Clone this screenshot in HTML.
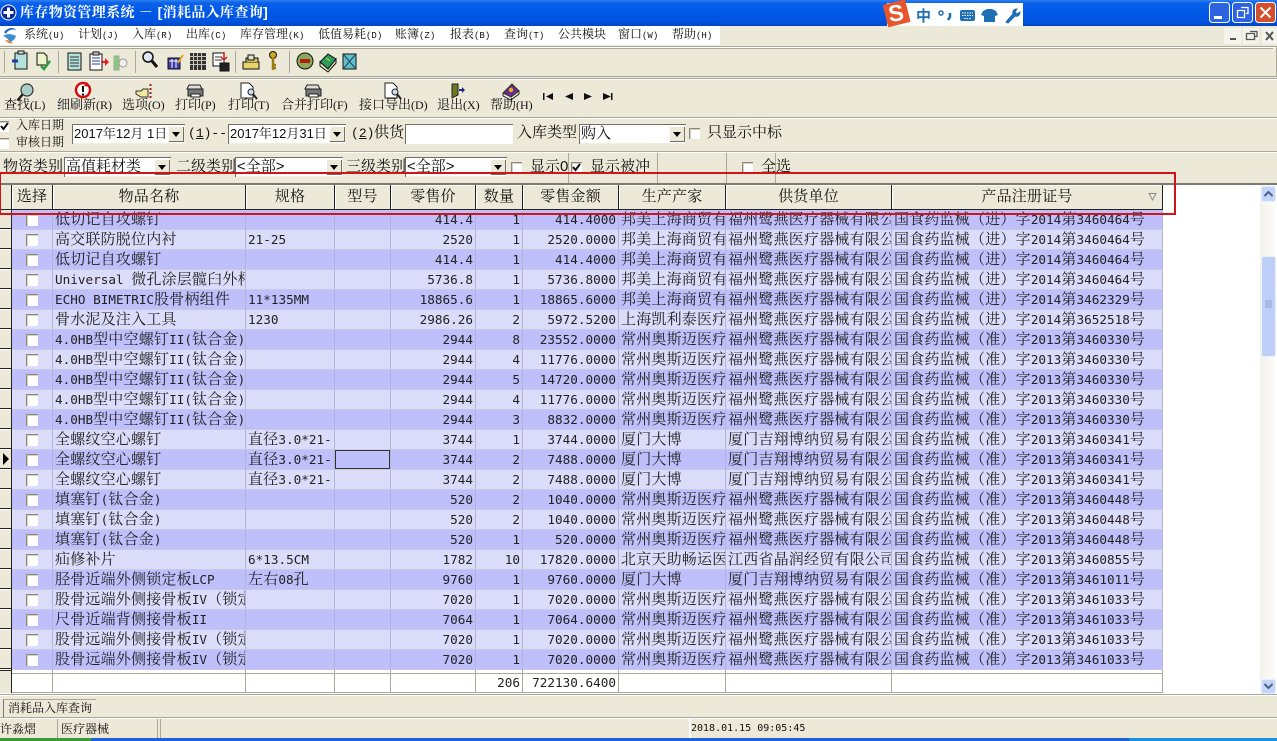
<!DOCTYPE html>
<html lang="zh"><head><meta charset="utf-8"><title>库存物资管理系统</title>
<style>
html,body{margin:0;padding:0}
body{width:1277px;height:741px;overflow:hidden;position:relative;background:#ece9d8;font-family:"Liberation Sans","Noto Serif CJK SC",serif;color:#111}
.a,.t{position:absolute}
.t{white-space:nowrap;line-height:20px;font-size:15px}
.t i{font:normal 9px "Liberation Mono",monospace}
.m{font-size:12px;top:24px;height:20px}
.b{font-size:13px;top:95px}
.b i{font:normal 12px "Liberation Serif",serif}
.f{font-size:15px}
.combo{position:absolute;background:#fff;box-shadow:inset 1px 1px 0 #716f64,inset -1px -1px 0 #f1efe2;height:20px;font-size:15px;line-height:20px;padding-left:2px;box-sizing:border-box;overflow:hidden;white-space:nowrap}
.combo u{position:absolute;right:1px;top:2px;width:16px;height:16px;background:#ece9d8;box-shadow:inset 1px 1px 0 #fff,inset -1px -1px 0 #716f64;text-decoration:none}
.combo u:after{content:"";position:absolute;left:4px;top:6px;border:4px solid transparent;border-top:5px solid #000;border-bottom:0}
.cb{position:absolute;width:11px;height:11px;background:#fff;box-shadow:inset 1px 1px 0 #8a887c,inset 2px 2px 0 #d5d2c4}
.hd{position:absolute;top:185px;height:24px;background:#ece9d8;border-right:1px solid #222;box-shadow:inset 1px 1px 0 #fff;text-align:center;font-size:15px;line-height:24px;box-sizing:content-box;letter-spacing:.2px}
table{position:absolute;left:12px;top:210px;border-collapse:separate;border-spacing:0;table-layout:fixed;width:1151px;font-size:15px;letter-spacing:.2px}
tr{height:20px}
td{height:19px;padding:0 0 0 2px;border-right:1px solid #b4b4d8;border-bottom:1px solid #c9c9e6;overflow:hidden;white-space:nowrap;line-height:15px;box-sizing:content-box;vertical-align:middle;color:#222}
tr:nth-child(odd) td{background:#bfbffb}
tr:nth-child(even) td{background:#dbdbfa}
td.r{text-align:right;padding:0 2px 0 0}
td,td.r{font-size:15px}
td.r,td i{font-family:"DejaVu Sans Mono",monospace;font-size:12.67px;font-style:normal;letter-spacing:0;font-weight:normal}
td s{display:block;width:12px;height:12px;margin:0 0 0 14px;background:#fff;box-shadow:inset 1px 1px 0 #8a887c,inset 2px 2px 0 #d5d2c4}
td.c{padding:0}
</style></head><body>

<!-- title bar -->
<div class="a" style="left:0;top:0;width:1277px;height:26px;background:linear-gradient(#2f80f0 0,#0a62ea 3px,#0058e6 12px,#0055e0 21px,#0046c4 26px)"></div>
<svg class="a" style="left:0;top:4px" width="18" height="18"><circle cx="8.5" cy="8.5" r="7.5" fill="#0a2a9a" stroke="#fff"/><path d="M8.5 3.5v10M3.5 8.5h10" stroke="#fff" stroke-width="3"/></svg>
<div class="t" style="left:20px;top:2px;color:#fff;font-weight:bold;font-size:14px;letter-spacing:.35px">库存物资管理系统 － [消耗品入库查询]</div>

<!-- sogou bar -->
<div class="a" style="left:887px;top:3px;width:136px;height:23px;background:#fff"></div>
<svg class="a" style="left:881px;top:0" width="145" height="28">
<rect x="4" y="2" width="23" height="23" fill="#e8552a" transform="rotate(-14 15 13)"/>
<text x="15" y="21" text-anchor="middle" font-family="Liberation Sans" font-size="23" font-weight="bold" fill="#fff" transform="rotate(-8 15 13)">S</text>
<text x="35" y="21" font-family="Noto Sans CJK SC" font-size="15" font-weight="bold" fill="#1f6fb5">中</text>
<circle cx="60" cy="13" r="2" fill="none" stroke="#1f6fb5" stroke-width="1.5"/><path d="M69 13v4l-2 3" stroke="#1f6fb5" stroke-width="2.5" fill="none"/>
<rect x="79" y="10" width="15" height="11" rx="2" fill="#1f6fb5"/><path d="M81 13h11M81 15.5h11M83 18.500h7" stroke="#fff" stroke-dasharray="1.500 1"/>
<path d="M102 11l4-2h5l4 2 2 4-3 1v6h-11v-6l-3-1z" fill="#1f6fb5"/>
<path d="M125 22l7-8c-1-3 1-5 4-5l-2 3 2 2 3-2c0 3-2 5-5 4l-7 7z" fill="#1f6fb5" stroke="#1f6fb5"/>
</svg>

<!-- window buttons -->
<svg class="a" style="left:1208px;top:2px" width="69" height="22">
<rect x="1.500" y=".5" width="20" height="20" rx="3" fill="#2d62e0" stroke="#fff"/><rect x="6" y="14" width="8" height="3" fill="#fff"/>
<rect x="24.500" y=".5" width="20" height="20" rx="3" fill="#2d62e0" stroke="#fff"/><path d="M33 5.500h7v6h-2M29.500 8.500h7v7h-7z" stroke="#fff" fill="none" stroke-width="1.300"/>
<rect x="47.500" y=".5" width="20" height="20" rx="3" fill="#d4502c" stroke="#fff"/><path d="M52.500 5.500l10 10M62.500 5.500l-10 10" stroke="#fff" stroke-width="2"/>
</svg>

<!-- menu bar -->
<div class="a" style="left:0;top:26px;width:720px;height:19px;background:#fff"></div>
<svg class="a" style="left:2px;top:27px" width="16" height="17"><path d="M2 5C6 0 12 0 14 3 10 2 6 3 4 7z" fill="#2a6fc4"/><path d="M1 9c4-3 9-2 13 0-1 3-3 5-6 6C6 12 4 10 1 9z" fill="#3a8fd0"/><path d="M3 13c3 0 5 1 8 3-3 1-6 0-8-3z" fill="#e8812a"/></svg>
<div class="t m" style="left:24px">系统<i>(U)</i></div>
<div class="t m" style="left:78px">计划<i>(J)</i></div>
<div class="t m" style="left:132px">入库<i>(R)</i></div>
<div class="t m" style="left:186px">出库<i>(C)</i></div>
<div class="t m" style="left:240px">库存管理<i>(K)</i></div>
<div class="t m" style="left:318px">低值易耗<i>(D)</i></div>
<div class="t m" style="left:395px">账簿<i>(Z)</i></div>
<div class="t m" style="left:450px">报表<i>(B)</i></div>
<div class="t m" style="left:504px">查询<i>(T)</i></div>
<div class="t m" style="left:558px">公共模块</div>
<div class="t m" style="left:618px">窗口<i>(W)</i></div>
<div class="t m" style="left:672px">帮助<i>(H)</i></div>
<svg class="a" style="left:1224px;top:27px" width="53" height="18">
<rect x="0" y="1" width="17" height="16" fill="#f4f3ec"/><rect x="19" y="1" width="16" height="16" fill="#f4f3ec"/><rect x="38" y="1" width="15" height="16" fill="#f4f3ec"/>
<path d="M6 12h6" stroke="#555" stroke-width="2"/><path d="M26 4.500h7v5h-2M22.500 6.500h8v6h-8z" stroke="#555" fill="none" stroke-width="1.300"/><path d="M42 5l7 8M49 5l-7 8" stroke="#555" stroke-width="2"/>
</svg>

<!-- toolbar lines -->
<div class="a" style="left:0;top:46px;width:1277px;height:1px;background:#aca899"></div>
<div class="a" style="left:0;top:47px;width:1277px;height:1px;background:#fff"></div>
<div class="a" style="left:0;top:48px;width:1273px;height:1px;background:#aca899"></div>
<div class="a" style="left:0;top:76px;width:1277px;height:1px;background:#aca899"></div>
<div class="a" style="left:0;top:78px;width:1277px;height:1px;background:#aca899"></div>
<div class="a" style="left:0;top:79px;width:1277px;height:1px;background:#fff"></div>
<div class="a" style="left:0;top:117px;width:1277px;height:1px;background:#aca899"></div>
<div class="a" style="left:0;top:118px;width:1277px;height:1px;background:#fff"></div>
<div class="a" style="left:0;top:151px;width:1277px;height:1px;background:#aca899"></div>
<div class="a" style="left:0;top:152px;width:1277px;height:1px;background:#fff"></div>
<div class="a" style="left:1276px;top:46px;width:1px;height:30px;background:#aca899"></div>

<!-- toolbar 1 icons -->
<svg class="a" style="left:0;top:48px" width="370" height="28">
<g stroke="#aca899"><path d="M4.500 3v22M58.500 3v22M135.500 3v22M235.500 3v22M289.500 3v22"/></g>
<g stroke="#111" stroke-width="1">
<rect x="15" y="5" width="12" height="16" fill="#b6e2dc"/><rect x="18" y="3" width="6" height="3" fill="#ddd"/><path d="M12 13h6" stroke="#1c3ca8" stroke-width="3"/>
<path d="M37 5h7l3 3v9h-10z" fill="#eef2c8"/><path d="M41 18l3 3 6-8" stroke="#2c9a3c" stroke-width="2.500" fill="none"/>
<rect x="68" y="5" width="13" height="17" fill="#b6e2dc"/><path d="M70 9h9M70 12h9M70 15h9M70 18h9" stroke="#333"/>
<rect x="90" y="6" width="12" height="16" fill="#fff"/><rect x="93" y="4" width="6" height="3" fill="#ccc"/><path d="M92 10h8M92 13h8M92 16h8" stroke="#223a9a"/><path d="M101 13h4v-3l4 4-4 4v-3h-4z" fill="#e02020" stroke="none"/>
<path d="M114 8h5v14h-5z" fill="#8bc87c" stroke="#9a9"/><circle cx="123" cy="15" r="4" fill="#eee" stroke="#999"/>
<circle cx="148" cy="9" r="5" fill="#dfe8f0" stroke-width="1.500"/><path d="M152 13l5 6" stroke-width="3"/>
<rect x="168" y="10" width="12" height="11" fill="#3a3aa8"/><path d="M169 13h10M172 11v9M176 11v9" stroke="#fff"/><path d="M178 15l5-8" stroke="#e0a020" stroke-width="2"/>
<g fill="#333" stroke="none"><rect x="190" y="5" width="16" height="17"/></g><path d="M190 8.500h16M190 12.500h16M190 16.500h16M193.500 5v17M197.500 5v17M201.500 5v17" stroke="#c8c6b4"/>
<rect x="213" y="5" width="11" height="13" fill="#fff"/><path d="M215 9h7M215 12h7" stroke="#333"/><rect x="220" y="15" width="9" height="8" fill="#222"/><path d="M224 4v8M221 9l3 3 3-3" stroke="#d02020" stroke-width="1.500" fill="none"/>
<path d="M243 14h16v7h-16z" fill="#e8d46a"/><path d="M246 14v-4h12v4" fill="#d0c060"/><rect x="248" y="7" width="6" height="5" fill="#e0e0d0"/>
<circle cx="273" cy="7" r="3.500" fill="#d0a820"/><path d="M273 10v12M273 17h3M273 20h3" stroke="#a07c10" stroke-width="2.500"/>
<circle cx="305" cy="13" r="8" fill="#8ca85c"/><rect x="300" y="11" width="10" height="4" fill="#b02010" stroke="none"/>
<path d="M320 14l8-8 8 5-8 10z" fill="#2a9c5c"/><path d="M320 14v4l8 6 8-9v-4l-8 10z" fill="#e8e8c0"/><path d="M326 10l4 3" stroke="#e0d030"/>
<rect x="343" y="6" width="13" height="15" fill="#60c0c8"/><path d="M344 7l11 13M355 7l-11 13" stroke="#246"/>
</g></svg>

<!-- toolbar 2 icons -->
<svg class="a" style="left:0;top:80px" width="620" height="24">
<circle cx="27" cy="10" r="6" fill="#a8d0c8" stroke="#333" stroke-width="1.200"/><path d="M22.500 14.500l-5 6" stroke="#222" stroke-width="2.500"/>
<circle cx="83" cy="10" r="7" fill="#fff" stroke="#d01010" stroke-width="2.500"/><path d="M83 6v6M83 13.500v2" stroke="#111" stroke-width="2"/><path d="M87 2l3 5-6-1z" fill="#d01010"/>
<path d="M136 11h5l2-2h5v8h-7l-5-3z" fill="#f0e8a0" stroke="#333"/><path d="M150.500 4v14" stroke="#a02020" stroke-width="2" stroke-dasharray="2 2"/>
<path d="M189 5h11l2 4h-15z" fill="#ddd" stroke="#222"/><rect x="188" y="9" width="15" height="7" fill="#777" stroke="#222"/><rect x="191" y="14" width="9" height="3" fill="#fff" stroke="#222"/>
<path d="M241 3h8l4 4v11h-12z" fill="#fff" stroke="#222"/><circle cx="251" cy="12" r="3" fill="#cde" stroke="#222"/><path d="M253 14l4 5" stroke="#222" stroke-width="2"/>
<path d="M307 5h11l2 4h-15z" fill="#ddd" stroke="#222"/><rect x="306" y="9" width="15" height="7" fill="#777" stroke="#222"/><rect x="309" y="14" width="9" height="3" fill="#fff" stroke="#222"/>
<path d="M385 3h8l4 4v11h-12z" fill="#fff" stroke="#222"/><circle cx="395" cy="12" r="3" fill="#cde" stroke="#222"/><path d="M397 14l4 5" stroke="#222" stroke-width="2"/>
<path d="M452 4h6v11l-6 3z" fill="#6c7a20" stroke="#222"/><path d="M459 9h3v-2l3 3-3 3v-2h-3z" fill="#202a90"/>
<path d="M503 13v3l8 4 8-6v-3z" fill="#e8e8e8" stroke="#222"/><path d="M503 13l9-9 7 7-8 6z" fill="#6a2c90" stroke="#331"/><circle cx="511" cy="10" r="2.200" fill="#e8b020"/>
<g fill="#111"><rect x="543" y="13" width="1.500" height="7"/><path d="M553 13v7l-7-3.500zM573 13v7l-8-3.500zM584 13v7l8-3.500zM603 13v7l8-3.500z"/><rect x="611" y="13" width="1.500" height="7"/></g>
</svg>
<div class="t b" style="left:4px">查找<i>(L)</i></div>
<div class="t b" style="left:57px">细刷新<i>(R)</i></div>
<div class="t b" style="left:122px">选项<i>(O)</i></div>
<div class="t b" style="left:175px">打印<i>(P)</i></div>
<div class="t b" style="left:228px">打印<i>(T)</i></div>
<div class="t b" style="left:281px">合并打印<i>(F)</i></div>
<div class="t b" style="left:359px">接口导出<i>(D)</i></div>
<div class="t b" style="left:437px">退出<i>(X)</i></div>
<div class="t b" style="left:490px">帮助<i>(H)</i></div>

<!-- filter row 1 -->
<div class="cb" style="left:-2px;top:121px"></div>
<svg class="a" style="left:0;top:121px" width="10" height="11"><path d="M1 5l2.500 3L8 2" stroke="#111" stroke-width="2" fill="none"/></svg>
<div class="cb" style="left:-2px;top:138px"></div>
<div class="t" style="left:16px;top:115px;font-size:12px">入库日期</div>
<div class="t" style="left:16px;top:132px;font-size:12px">审核日期</div>
<div class="combo" style="left:72px;top:124px;width:113px;font-size:13px">2017年12月 1日<u></u></div>
<div class="t" style="left:188px;top:124px;font:13px/20px 'Liberation Mono',monospace">(<span style="text-decoration:underline">1</span>)--</div>
<div class="combo" style="left:228px;top:124px;width:118px;font-size:13px">2017年12月31日<u></u></div>
<div class="t" style="left:351px;top:124px;font:13px/20px 'Liberation Mono',monospace">(<span style="text-decoration:underline">2</span>)</div>
<div class="t f" style="left:374px;top:123px">供货</div>
<div class="a" style="left:405px;top:124px;width:108px;height:20px;background:#fff;box-shadow:inset 1px 1px 0 #716f64"></div>
<div class="t f" style="left:517px;top:123px">入库类型</div>
<div class="combo" style="left:579px;top:124px;width:107px">购入<u></u></div>
<div class="cb" style="left:689px;top:128px"></div>
<div class="t f" style="left:707px;top:123px">只显示中标</div>

<!-- filter row 2 -->
<div class="t f" style="left:3px;top:157px">物资类别</div>
<div class="combo" style="left:64px;top:157px;width:107px">高值耗材类<u></u></div>
<div class="t f" style="left:176px;top:157px">二级类别</div>
<div class="combo" style="left:235px;top:157px;width:108px">&lt;全部&gt;<u></u></div>
<div class="t f" style="left:346px;top:157px">三级类别</div>
<div class="combo" style="left:405px;top:157px;width:102px">&lt;全部&gt;<u></u></div>
<div class="cb" style="left:511px;top:162px"></div>
<div class="t f" style="left:530px;top:157px">显示0</div>
<div class="a" style="left:568px;top:153px;width:1px;height:30px;background:#aca899"></div>
<div class="cb" style="left:571px;top:162px"></div>
<svg class="a" style="left:571px;top:162px" width="11" height="11"><path d="M2 5l2.500 3L9 2" stroke="#111" stroke-width="2" fill="none"/></svg>
<div class="t f" style="left:590px;top:157px">显示被冲</div>
<div class="a" style="left:657px;top:153px;width:1px;height:30px;background:#aca899"></div>
<div class="a" style="left:726px;top:153px;width:1px;height:30px;background:#aca899"></div>
<div class="a" style="left:775px;top:153px;width:1px;height:30px;background:#aca899"></div>
<div class="cb" style="left:742px;top:162px"></div>
<div class="t f" style="left:761px;top:157px">全选</div>

<!-- grid area -->
<div class="a" style="left:0;top:183px;width:1277px;height:511px;background:#fff"></div>
<div class="a" style="left:0;top:183px;width:1277px;height:2px;background:#7d7b6f"></div>
<table><colgroup><col style="width:41px"><col style="width:193px"><col style="width:89px"><col style="width:56px"><col style="width:85px"><col style="width:47px"><col style="width:96px"><col style="width:107px"><col style="width:166px"><col style="width:271px"></colgroup><tbody>
<tr><td class="c"><s></s></td><td>低切记自攻螺钉</td><td></td><td></td><td class="r">414.4</td><td class="r">1</td><td class="r">414.4000</td><td>邦美上海商贸有</td><td>福州鹭燕医疗器械有限公</td><td>国食药监械（进）字<i>2014</i>第<i>3460464</i>号</td></tr>
<tr><td class="c"><s></s></td><td>高交联防脱位内衬</td><td><i>21-25</i></td><td></td><td class="r">2520</td><td class="r">1</td><td class="r">2520.0000</td><td>邦美上海商贸有</td><td>福州鹭燕医疗器械有限公</td><td>国食药监械（进）字<i>2014</i>第<i>3460464</i>号</td></tr>
<tr><td class="c"><s></s></td><td>低切记自攻螺钉</td><td></td><td></td><td class="r">414.4</td><td class="r">1</td><td class="r">414.4000</td><td>邦美上海商贸有</td><td>福州鹭燕医疗器械有限公</td><td>国食药监械（进）字<i>2014</i>第<i>3460464</i>号</td></tr>
<tr><td class="c"><s></s></td><td><i>Universal </i>微孔涂层髋臼外杯</td><td></td><td></td><td class="r">5736.8</td><td class="r">1</td><td class="r">5736.8000</td><td>邦美上海商贸有</td><td>福州鹭燕医疗器械有限公</td><td>国食药监械（进）字<i>2014</i>第<i>3460464</i>号</td></tr>
<tr><td class="c"><s></s></td><td><i>ECHO BIMETRIC</i>股骨柄组件</td><td><i>11*135MM</i></td><td></td><td class="r">18865.6</td><td class="r">1</td><td class="r">18865.6000</td><td>邦美上海商贸有</td><td>福州鹭燕医疗器械有限公</td><td>国食药监械（进）字<i>2014</i>第<i>3462329</i>号</td></tr>
<tr><td class="c"><s></s></td><td>骨水泥及注入工具</td><td><i>1230</i></td><td></td><td class="r">2986.26</td><td class="r">2</td><td class="r">5972.5200</td><td>上海凯利泰医疗</td><td>福州鹭燕医疗器械有限公</td><td>国食药监械（进）字<i>2014</i>第<i>3652518</i>号</td></tr>
<tr><td class="c"><s></s></td><td><i>4.0HB</i>型中空螺钉<i>II(</i>钛合金<i>)</i></td><td></td><td></td><td class="r">2944</td><td class="r">8</td><td class="r">23552.0000</td><td>常州奥斯迈医疗</td><td>福州鹭燕医疗器械有限公</td><td>国食药监械（准）字<i>2013</i>第<i>3460330</i>号</td></tr>
<tr><td class="c"><s></s></td><td><i>4.0HB</i>型中空螺钉<i>II(</i>钛合金<i>)</i></td><td></td><td></td><td class="r">2944</td><td class="r">4</td><td class="r">11776.0000</td><td>常州奥斯迈医疗</td><td>福州鹭燕医疗器械有限公</td><td>国食药监械（准）字<i>2013</i>第<i>3460330</i>号</td></tr>
<tr><td class="c"><s></s></td><td><i>4.0HB</i>型中空螺钉<i>II(</i>钛合金<i>)</i></td><td></td><td></td><td class="r">2944</td><td class="r">5</td><td class="r">14720.0000</td><td>常州奥斯迈医疗</td><td>福州鹭燕医疗器械有限公</td><td>国食药监械（准）字<i>2013</i>第<i>3460330</i>号</td></tr>
<tr><td class="c"><s></s></td><td><i>4.0HB</i>型中空螺钉<i>II(</i>钛合金<i>)</i></td><td></td><td></td><td class="r">2944</td><td class="r">4</td><td class="r">11776.0000</td><td>常州奥斯迈医疗</td><td>福州鹭燕医疗器械有限公</td><td>国食药监械（准）字<i>2013</i>第<i>3460330</i>号</td></tr>
<tr><td class="c"><s></s></td><td><i>4.0HB</i>型中空螺钉<i>II(</i>钛合金<i>)</i></td><td></td><td></td><td class="r">2944</td><td class="r">3</td><td class="r">8832.0000</td><td>常州奥斯迈医疗</td><td>福州鹭燕医疗器械有限公</td><td>国食药监械（准）字<i>2013</i>第<i>3460330</i>号</td></tr>
<tr><td class="c"><s></s></td><td>全螺纹空心螺钉</td><td>直径<i>3.0*21-</i></td><td></td><td class="r">3744</td><td class="r">1</td><td class="r">3744.0000</td><td>厦门大博</td><td>厦门吉翔博纳贸易有限公</td><td>国食药监械（准）字<i>2013</i>第<i>3460341</i>号</td></tr>
<tr><td class="c"><s></s></td><td>全螺纹空心螺钉</td><td>直径<i>3.0*21-</i></td><td></td><td class="r">3744</td><td class="r">2</td><td class="r">7488.0000</td><td>厦门大博</td><td>厦门吉翔博纳贸易有限公</td><td>国食药监械（准）字<i>2013</i>第<i>3460341</i>号</td></tr>
<tr><td class="c"><s></s></td><td>全螺纹空心螺钉</td><td>直径<i>3.0*21-</i></td><td></td><td class="r">3744</td><td class="r">2</td><td class="r">7488.0000</td><td>厦门大博</td><td>厦门吉翔博纳贸易有限公</td><td>国食药监械（准）字<i>2013</i>第<i>3460341</i>号</td></tr>
<tr><td class="c"><s></s></td><td>填塞钉<i>(</i>钛合金<i>)</i></td><td></td><td></td><td class="r">520</td><td class="r">2</td><td class="r">1040.0000</td><td>常州奥斯迈医疗</td><td>福州鹭燕医疗器械有限公</td><td>国食药监械（准）字<i>2013</i>第<i>3460448</i>号</td></tr>
<tr><td class="c"><s></s></td><td>填塞钉<i>(</i>钛合金<i>)</i></td><td></td><td></td><td class="r">520</td><td class="r">2</td><td class="r">1040.0000</td><td>常州奥斯迈医疗</td><td>福州鹭燕医疗器械有限公</td><td>国食药监械（准）字<i>2013</i>第<i>3460448</i>号</td></tr>
<tr><td class="c"><s></s></td><td>填塞钉<i>(</i>钛合金<i>)</i></td><td></td><td></td><td class="r">520</td><td class="r">1</td><td class="r">520.0000</td><td>常州奥斯迈医疗</td><td>福州鹭燕医疗器械有限公</td><td>国食药监械（准）字<i>2013</i>第<i>3460448</i>号</td></tr>
<tr><td class="c"><s></s></td><td>疝修补片</td><td><i>6*13.5CM</i></td><td></td><td class="r">1782</td><td class="r">10</td><td class="r">17820.0000</td><td>北京天助畅运医</td><td>江西省晶润经贸有限公司</td><td>国食药监械（准）字<i>2013</i>第<i>3460855</i>号</td></tr>
<tr><td class="c"><s></s></td><td>胫骨近端外侧锁定板<i>LCP</i></td><td>左右<i>08</i>孔</td><td></td><td class="r">9760</td><td class="r">1</td><td class="r">9760.0000</td><td>厦门大博</td><td>厦门吉翔博纳贸易有限公</td><td>国食药监械（准）字<i>2013</i>第<i>3461011</i>号</td></tr>
<tr><td class="c"><s></s></td><td>股骨远端外侧接骨板<i>IV</i>（锁定</td><td></td><td></td><td class="r">7020</td><td class="r">1</td><td class="r">7020.0000</td><td>常州奥斯迈医疗</td><td>福州鹭燕医疗器械有限公</td><td>国食药监械（准）字<i>2013</i>第<i>3461033</i>号</td></tr>
<tr><td class="c"><s></s></td><td>尺骨近端背侧接骨板<i>II</i></td><td></td><td></td><td class="r">7064</td><td class="r">1</td><td class="r">7064.0000</td><td>常州奥斯迈医疗</td><td>福州鹭燕医疗器械有限公</td><td>国食药监械（准）字<i>2013</i>第<i>3461033</i>号</td></tr>
<tr><td class="c"><s></s></td><td>股骨远端外侧接骨板<i>IV</i>（锁定</td><td></td><td></td><td class="r">7020</td><td class="r">1</td><td class="r">7020.0000</td><td>常州奥斯迈医疗</td><td>福州鹭燕医疗器械有限公</td><td>国食药监械（准）字<i>2013</i>第<i>3461033</i>号</td></tr>
<tr><td class="c"><s></s></td><td>股骨远端外侧接骨板<i>IV</i>（锁定</td><td></td><td></td><td class="r">7020</td><td class="r">1</td><td class="r">7020.0000</td><td>常州奥斯迈医疗</td><td>福州鹭燕医疗器械有限公</td><td>国食药监械（准）字<i>2013</i>第<i>3461033</i>号</td></tr>
</tbody></table>

<!-- selected cell -->
<div class="a" style="left:335px;top:450px;width:53px;height:17px;border:1px dotted #111;outline:1px solid #333;outline-offset:-1px"></div>

<!-- total row -->
<div class="a" style="left:12px;top:670px;width:1151px;height:23px;background:#fff;border-bottom:1px solid #aca899;box-sizing:border-box"></div>
<div class="a" style="left:12px;top:673px;width:1151px;height:1px;background:#aca899"></div>
<div class="a" style="left:52px;top:670px;width:1px;height:23px;background:#aca899"></div>
<div class="a" style="left:245px;top:670px;width:1px;height:23px;background:#aca899"></div>
<div class="a" style="left:334px;top:670px;width:1px;height:23px;background:#aca899"></div>
<div class="a" style="left:390px;top:670px;width:1px;height:23px;background:#aca899"></div>
<div class="a" style="left:475px;top:670px;width:1px;height:23px;background:#aca899"></div>
<div class="a" style="left:522px;top:670px;width:1px;height:23px;background:#aca899"></div>
<div class="a" style="left:618px;top:670px;width:1px;height:23px;background:#aca899"></div>
<div class="a" style="left:725px;top:670px;width:1px;height:23px;background:#aca899"></div>
<div class="a" style="left:891px;top:670px;width:1px;height:23px;background:#aca899"></div>
<div class="a" style="left:1162px;top:670px;width:1px;height:23px;background:#aca899"></div>
<div class="t" style="left:476px;top:673px;width:44px;text-align:right;font:12.67px/20px 'DejaVu Sans Mono',monospace;color:#222">206</div>
<div class="t" style="left:523px;top:673px;width:93px;text-align:right;font:12.67px/20px 'DejaVu Sans Mono',monospace;color:#222">722130.6400</div>

<!-- indicator column -->
<div class="a" style="left:0;top:185px;width:11px;height:25px;background:#ece9d8;border-bottom:1px solid #222;box-sizing:border-box"></div>
<div class="a" style="left:0;top:210px;width:11px;height:460px;background:repeating-linear-gradient(#ece9d8 0,#ece9d8 18px,#222 18px,#222 19px,#fff 19px,#fff 20px)"></div>
<div class="a" style="left:0;top:670px;width:11px;height:23px;background:#ece9d8;border-top:1px solid #222;box-sizing:border-box"></div>
<div class="a" style="left:11px;top:185px;width:1px;height:508px;background:#222"></div>
<div class="a" style="left:3px;top:453px;border-left:6px solid #000;border-top:6px solid transparent;border-bottom:6px solid transparent"></div>

<!-- header -->
<div class="hd" style="left:12px;width:40px">选择</div>
<div class="hd" style="left:53px;width:192px">物品名称</div>
<div class="hd" style="left:246px;width:88px">规格</div>
<div class="hd" style="left:335px;width:55px">型号</div>
<div class="hd" style="left:391px;width:84px">零售价</div>
<div class="hd" style="left:476px;width:46px">数量</div>
<div class="hd" style="left:523px;width:95px">零售金额</div>
<div class="hd" style="left:619px;width:106px">生产产家</div>
<div class="hd" style="left:726px;width:165px">供货单位</div>
<div class="hd" style="left:892px;width:270px">产品注册证号</div>
<div class="a" style="left:12px;top:209px;width:1151px;height:1px;background:#222"></div>
<svg class="a" style="left:1148px;top:192px" width="10" height="10"><path d="M1 1.500h7L4.500 8z" fill="none" stroke="#888"/></svg>

<!-- red box -->
<div class="a" style="left:0;top:172px;width:1176px;height:43px;border:2px solid #d0141c;border-left:1px solid #d0141c;box-sizing:border-box"></div>

<!-- scrollbar -->
<div class="a" style="left:1260px;top:185px;width:16px;height:509px;background:linear-gradient(90deg,#f3f1ec,#fdfdfa)"></div>
<svg class="a" style="left:1260px;top:185px" width="17" height="509">
<rect x="1.500" y="1.500" width="14" height="15" rx="2" fill="#c3d5fb" stroke="#e8eefc"/><path d="M4.500 11l4-4 4 4" stroke="#4d6185" stroke-width="2" fill="none"/>
<rect x="1.500" y="71.500" width="14" height="100" rx="2" fill="#bed0f8" stroke="#eef2fc"/><path d="M5 116h7M5 118h7M5 120h7M5 122h7" stroke="#8ea6d8"/>
<rect x="1.500" y="494.500" width="14" height="14" rx="2" fill="#c3d5fb" stroke="#e8eefc"/><path d="M4.500 499l4 4 4-4" stroke="#4d6185" stroke-width="2" fill="none"/>
</svg>

<!-- bottom -->
<div class="a" style="left:0;top:694px;width:1277px;height:1px;background:#aca899"></div>
<div class="a" style="left:0;top:695px;width:1277px;height:1px;background:#fff"></div>
<div class="a" style="left:3px;top:699px;width:93px;height:18px;border-left:1px solid #777;border-top:1px solid #aca899;box-sizing:border-box"></div>
<div class="t" style="left:8px;top:698px;font-size:12px">消耗品入库查询</div>
<div class="a" style="left:0;top:717px;width:1277px;height:1px;background:#aca899"></div>
<div class="a" style="left:0;top:718px;width:1277px;height:1px;background:#fff"></div>
<div class="t" style="left:0;top:719px;font-size:12px">许淼熠</div>
<div class="a" style="left:57px;top:719px;width:1px;height:19px;background:#aca899"></div>
<div class="t" style="left:61px;top:719px;font-size:12px">医疗器械</div>
<div class="a" style="left:157px;top:719px;width:1px;height:19px;background:#aca899"></div>
<div class="a" style="left:160px;top:719px;width:1px;height:19px;background:#aca899"></div>
<div class="a" style="left:689px;top:719px;width:2px;height:19px;background:#fff"></div>
<div class="t" style="left:691px;top:719px;font:10px/20px 'DejaVu Sans Mono',monospace">2018.01.15 09:05:45</div>
<div class="a" style="left:0;top:738px;width:1277px;height:3px;background:#1f62d8"></div>
<div class="a" style="left:0;top:738px;width:91px;height:3px;background:#3a9a3c"></div>
<div class="a" style="left:1129px;top:738px;width:148px;height:3px;background:#1a90e0"></div>
</body></html>
